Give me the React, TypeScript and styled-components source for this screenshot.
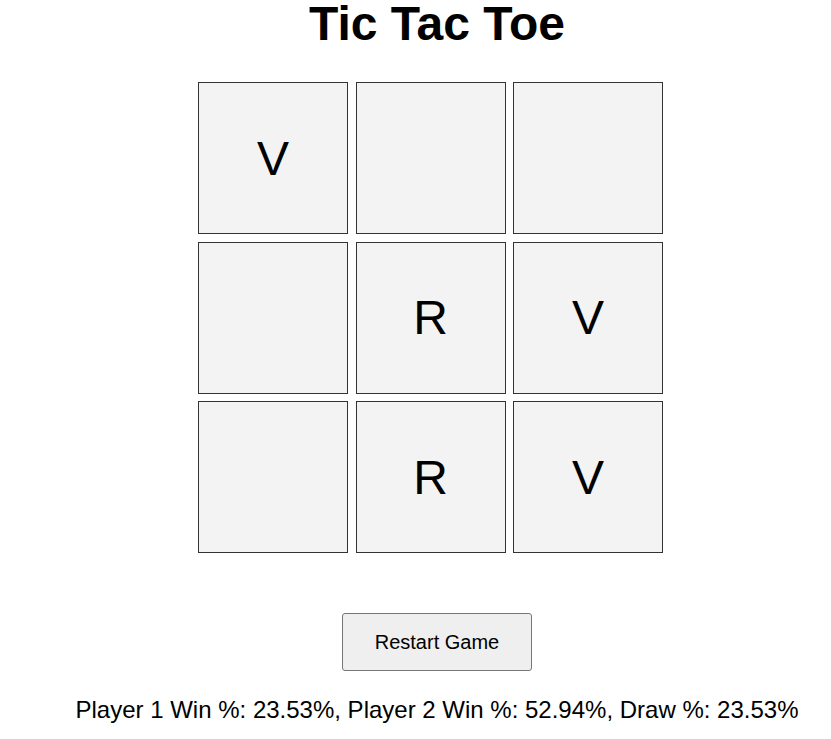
import React from "react";
import styled, { createGlobalStyle } from "styled-components";

const Global = createGlobalStyle`
  html, body { margin: 0; padding: 0; background: #ffffff; }
  body { font-family: "Liberation Sans", Arial, sans-serif; color: #000; }
`;

const Page = styled.div`
  width: 858px;
  margin-left: 8px;
  display: flex;
  flex-direction: column;
  align-items: center;
`;

const Title = styled.h1`
  margin: 0;
  font-size: 48px;
  line-height: 48px;
  font-weight: 700;
`;

const BoardWrap = styled.div`
  width: 478px;
  margin-top: 34px;
`;

const Board = styled.div`
  display: grid;
  grid-template-columns: repeat(3, 150px);
  grid-template-rows: repeat(3, 152px);
  column-gap: 7.5px;
  row-gap: 7.5px;
`;

const Cell = styled.div`
  box-sizing: border-box;
  background: #f3f3f3;
  border: 1px solid #333333;
  display: flex;
  align-items: center;
  justify-content: center;
  font-size: 48px;
  font-weight: 400;
`;

const RestartButton = styled.button`
  margin-top: 60px;
  width: 190px;
  height: 58px;
  box-sizing: border-box;
  background: #efefef;
  border: 1px solid #767676;
  border-radius: 3px;
  font-family: "Liberation Sans", Arial, sans-serif;
  font-size: 20px;
  color: #000;
`;

const Stats = styled.p`
  margin: 25px 0 0;
  font-size: 24px;
  line-height: 28px;
`;

const cells = ["V", "", "", "", "R", "V", "", "R", "V"];

export default function App() {
  return (
    <>
      <Global />
      <Page>
        <Title>Tic Tac Toe</Title>
        <BoardWrap>
          <Board>
            {cells.map((c, i) => (
              <Cell key={i}>{c}</Cell>
            ))}
          </Board>
        </BoardWrap>
        <RestartButton>Restart Game</RestartButton>
        <Stats>Player 1 Win %: 23.53%, Player 2 Win %: 52.94%, Draw %: 23.53%</Stats>
      </Page>
    </>
  );
}
